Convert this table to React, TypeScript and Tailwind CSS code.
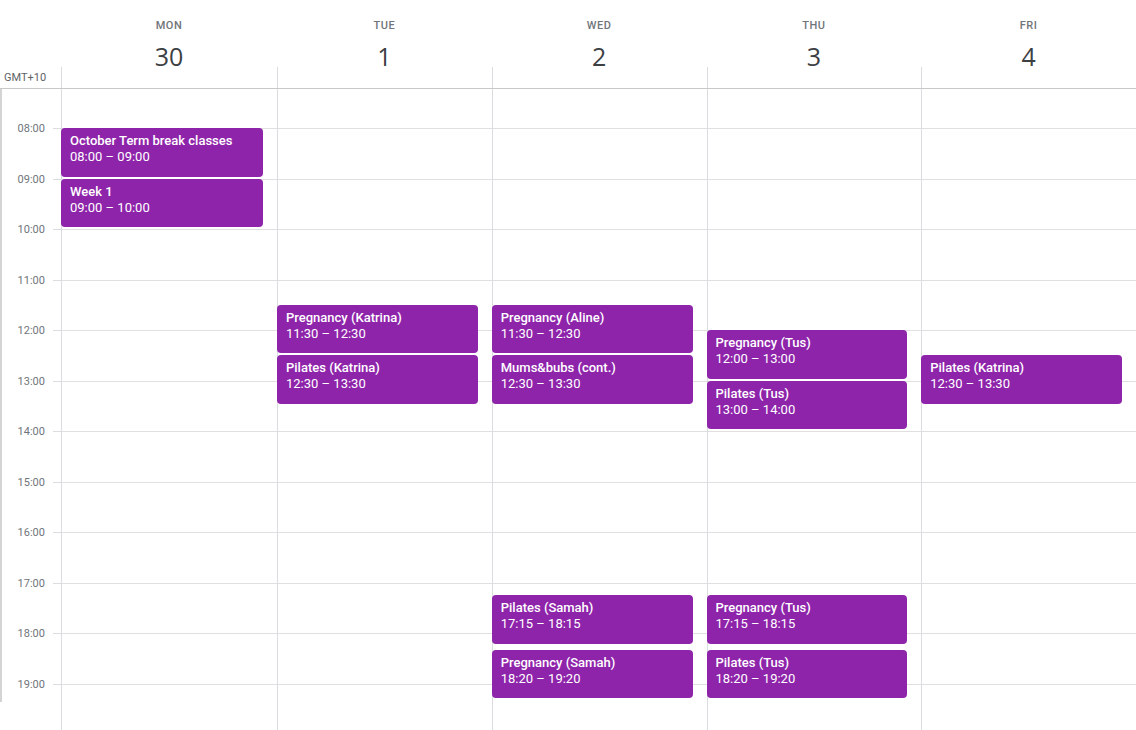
import React from 'react';

const HOUR = 50.5;
const BODY_TOP = 89;
const FIRST_LINE = 128; // 08:00

const days = [
  {name: 'MON', date: '30'},
  {name: 'TUE', date: '1'},
  {name: 'WED', date: '2'},
  {name: 'THU', date: '3'},
  {name: 'FRI', date: '4'},
];

const hours = ['09:00', '10:00', '11:00', '12:00', '13:00', '14:00', '15:00', '16:00', '17:00', '18:00', '19:00', ''];

type CalEvent = {title: string; start: string; end: string};

const events: CalEvent[][] = [
  [
    {title: 'October Term break classes', start: '08:00', end: '09:00'},
    {title: 'Week 1', start: '09:00', end: '10:00'},
  ],
  [
    {title: 'Pregnancy (Katrina)', start: '11:30', end: '12:30'},
    {title: 'Pilates (Katrina)', start: '12:30', end: '13:30'},
  ],
  [
    {title: 'Pregnancy (Aline)', start: '11:30', end: '12:30'},
    {title: 'Mums&bubs (cont.)', start: '12:30', end: '13:30'},
    {title: 'Pilates (Samah)', start: '17:15', end: '18:15'},
    {title: 'Pregnancy (Samah)', start: '18:20', end: '19:20'},
  ],
  [
    {title: 'Pregnancy (Tus)', start: '12:00', end: '13:00'},
    {title: 'Pilates (Tus)', start: '13:00', end: '14:00'},
    {title: 'Pregnancy (Tus)', start: '17:15', end: '18:15'},
    {title: 'Pilates (Tus)', start: '18:20', end: '19:20'},
  ],
  [{title: 'Pilates (Katrina)', start: '12:30', end: '13:30'}],
];

const toHours = (t: string): number => {
  const [h, m] = t.split(':').map(Number);
  return h + m / 60;
};

function EventBox({ev}: {ev: CalEvent}) {
  const s = toHours(ev.start);
  const e = toHours(ev.end);
  const top = FIRST_LINE + (s - 8) * HOUR - BODY_TOP;
  const height = (e - s) * HOUR - 2;
  return (
    <div
      className="absolute left-[-1px] right-[14px] rounded-[4px] bg-[#8e24aa] px-[9px] pt-[5px] text-[13px] leading-[16px] text-white"
      style={{top, height}}
    >
      <div className="font-medium truncate">{ev.title}</div>
      <div>
        {ev.start} – {ev.end}
      </div>
    </div>
  );
}

function HourLabel({label}: {label: string}) {
  if (!label) return null;
  return (
    <span className="absolute right-[8px] bottom-[-7px] text-[11px] leading-[14px] text-[#70757a]">{label}</span>
  );
}

// first column is one pixel wider, like the reference
const colWidth = (i: number) => (i === 0 ? 'w-[216px]' : 'flex-1');

export default function App() {
  return (
    <div className="relative w-[1136px] h-[730px] overflow-hidden bg-white font-['Roboto',_'Liberation_Sans',_sans-serif]">
      {/* header */}
      <div className="flex h-[89px] border-b border-[#c8c8c8]">
        <div className="w-[61px] flex flex-col justify-end pb-[3px] pl-[4px]">
          <span className="text-[11px] leading-[14px] text-[#5f6368]">GMT+10</span>
        </div>
        {days.map((d, i) => (
          <div key={d.name} className={`${colWidth(i)} flex flex-col`}>
            <div className="pt-[18px] text-center text-[11px] leading-[16px] font-medium tracking-[0.5px] text-[#70757a]">
              {d.name}
            </div>
            <div className="pt-[6px] mb-[-5px] text-center text-[25px] leading-[32px] text-[#3c4043] font-['Open_Sans',_sans-serif]">
              {d.date}
            </div>
            <div className="flex-1 border-l border-[#dadce0]" />
          </div>
        ))}
      </div>

      {/* body */}
      <div className="flex h-[641px]">
        <div className="w-[61px] relative">
          <div className="absolute left-0 top-0 h-[613px] w-[2px] bg-[#d4d4d4]" />
          <div className="flex h-[40px]">
            <div className="flex-1 relative">
              <HourLabel label="08:00" />
            </div>
            <div className="w-[8px] border-b border-[#dadce0]" />
          </div>
          {hours.map((h, i) => (
            <div key={i} className="flex h-[50.5px]">
              <div className="flex-1 relative">
                <HourLabel label={h} />
              </div>
              <div className="w-[8px] border-b border-[#dadce0]" />
            </div>
          ))}
        </div>
        {days.map((d, i) => (
          <div key={d.name} className={`${colWidth(i)} relative border-l border-[#dadce0]`}>
            <div className="h-[40px] border-b border-[#e0e0e0]" />
            {hours.map((h, k) => (
              <div key={k} className="h-[50.5px] border-b border-[#e0e0e0]" />
            ))}
            {events[i].map((ev, j) => (
              <EventBox key={j} ev={ev} />
            ))}
          </div>
        ))}
      </div>
    </div>
  );
}
